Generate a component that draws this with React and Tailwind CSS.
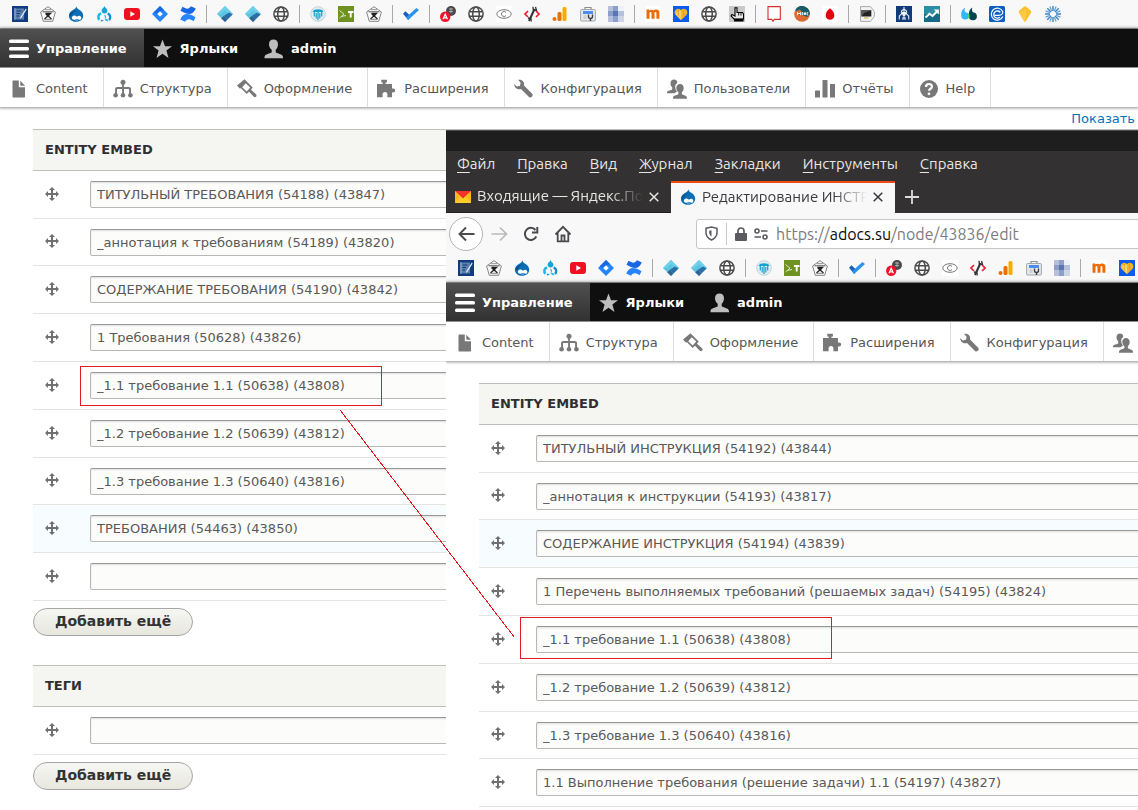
import React from "react";

/* ---------- bookmark icons, 16 x 16 ---------- */

const Fav = ({ children }) => (
  <svg width="16" height="16" viewBox="0 0 16 16" className="block shrink-0" aria-hidden="true">
    {children}
  </svg>
);

const Notebook = () => (
  <Fav>
    <rect width="16" height="16" fill="#123c80" />
    <rect x="2" y="2.5" width="10" height="11" fill="#5d7fae" />
    <path d="M4.5 5h5M4.5 7.500h3.500M4.500 10H7" stroke="#123c80" strokeWidth="1" />
    <path d="M3 2.500v11" stroke="#c7d5e8" strokeWidth="1" strokeDasharray="1 1" />
    <path d="M13.800 2.500 8.500 11l-.8 2 1.800-1.200L14.600 3.500z" fill="#e9f0f8" />
  </Fav>
);

const Pentagon = () => (
  <Fav>
    <path d="M8 .7 15.400 6 12.700 15.300H3.300L.6 6z" fill="#fafafa" stroke="#777" strokeWidth=".9" />
    <path d="M2.500 5.800h11" stroke="#555" strokeWidth="1" />
    <path d="M5 3.700h6" stroke="#777" strokeWidth=".8" />
    <path d="M5.500 7.500h5L8.700 9.300v1.200l2.800 2.500M5.500 7.500l1.800 1.800v1.200L4.500 13" fill="none" stroke="#222" strokeWidth="1.300" />
    <path d="M7 7h2v4H7z" fill="#222" />
    <path d="M4.500 13.300h7" stroke="#666" strokeWidth=".8" />
  </Fav>
);

const Drupal = () => (
  <Fav>
    <path d="M8.300.2C8.800 2.600 10.500 3.200 12 4.300c1.700 1.300 3.200 3.100 3.200 5.500 0 3.700-3 6-7.100 6C4 15.800.9 13.300.9 9.700c0-2.600 1.700-4.300 3.600-5.500C6.300 3.100 8 2.700 8.300.2z" fill="#0a6eb4" />
    <path d="M1.500 8.500C3 5.500 6 5.500 8 3.500 6.500 7 4 7 2.500 11z" fill="#0b4f86" />
    <path d="M4.300 10.600c1.800-1.900 3.600-.6 4.700.1 1.300-.8 2.600-1.300 3.800-.2 1.300 1.400.2 3.700-1.500 3.300-1-.2-1.600-1.100-2.400-1.100-1 .1-1.600 1.300-3.100 1.100-2-.3-2.500-2.100-1.500-3.200z" fill="#fff" />
    <path d="M7.300 14.300c.8-.5 1.800-.5 2.700 0" stroke="#fff" strokeWidth=".6" fill="none" />
  </Fav>
);

const Drop8 = () => (
  <Fav>
    <path d="M8.500 0c.4 1.800 2.900 2.500 2.900 4.600A2.900 2.900 0 0 1 8.500 7.500a2.900 2.900 0 0 1-2.900-2.900C5.600 2.500 8 1.800 8.500 0z" fill="#12a5dc" />
    <path d="M4.600 6.200A5 5 0 0 0 2.800 14.800L4.200 12.600A2.300 2.300 0 0 1 5.500 8.800z" fill="#1cb8ea" />
    <path d="M8.300 8.500A2.800 2.800 0 0 1 5.400 13.500L4.500 15.600A5 5 0 0 0 9 12z" fill="#0f96d0" />
    <path d="M12 6.400A5 5 0 0 1 13.700 14.800L12.200 12.900A2.400 2.400 0 0 0 11.200 8.800z" fill="#0f8fc9" />
    <path d="M9.500 12.500 11.800 13.500 12.400 15.300A4 4 0 0 1 9 14z" fill="#1cb8ea" />
  </Fav>
);

const YouTube = () => (
  <Fav>
    <rect y="2" width="16" height="12" rx="3.200" fill="#f0101f" />
    <path d="M6.300 5.200v5.600L11 8z" fill="#fff" />
  </Fav>
);

const Jira = () => (
  <Fav>
    <path d="M8 0l8 8-8 8-8-8z" fill="#2684ff" />
    <path d="M8 0l4 4-4 1.500L5 8 1.500 6.500z" fill="#1a6ae6" />
    <path d="M8 5.200 10.800 8 8 10.800 5.200 8z" fill="#fff" />
  </Fav>
);

const Confluence = () => (
  <Fav>
    <path d="M.5 4.800 2.500 .8C6.500 3.200 8.500 3.500 11 .3L15.800 2.500C12.500 9.800 7.500 9 .5 4.800z" fill="#1868e6" />
    <path d="M.2 13.500C3.500 6.200 8.500 7 15.500 11.200L13.500 15.200C9.500 12.800 7.500 12.500 5 15.700z" fill="#2684ff" />
  </Fav>
);

const Diamond = () => (
  <Fav>
    <path d="M8 0l8 8-8 8-8-8z" fill="#5cc3e0" />
    <path d="M8 0l8 8-4 0-4-4-4 4H0z" fill="#6fd0ea" />
    <path d="M12 6.500 15.500 8.500 10.400 13.500 7 9.800z" fill="#2b6fa8" />
    <path d="M7 9.800 10.400 13.500 8 16 4.200 12.300z" fill="#34618f" />
  </Fav>
);

const Globe = () => (
  <Fav>
    <g fill="none" stroke="#4a4a4a" strokeWidth="1.500">
      <circle cx="8" cy="8" r="7.100" />
      <ellipse cx="8" cy="8" rx="3.300" ry="7.100" />
      <path d="M1.500 5.700h13M1.500 10.300h13" />
    </g>
  </Fav>
);

const Tree = () => (
  <Fav>
    <circle cx="8" cy="8" r="7.300" fill="#e4eef3" stroke="#b5c9d2" strokeWidth=".8" />
    <path d="M2.500 6C3 3.800 5.500 3.200 8 3.200s5 .6 5.500 2.800z" fill="#12a3d4" />
    <path d="M4.300 5.500v5M8 5.500V14M11.700 5.500v5M6.200 7v5.500M9.800 7v5.500" fill="none" stroke="#159fd0" strokeWidth="1.200" />
  </Fav>
);

const GreenT = () => (
  <Fav>
    <rect width="16" height="16" fill="#6f9222" />
    <path d="M1.500 4.500 6 8.200 1.500 12M3.500 10.500 8 9.500" stroke="#dce8c0" strokeWidth="1" fill="none" />
    <path d="M10 6h5.500M12.700 6v5.500" stroke="#fff" strokeWidth="1.900" />
  </Fav>
);

const Check = () => (
  <Fav>
    <path d="M0 7.800 2.500 5.300 7.500 10 5.300 14z" fill="#1a5fc0" />
    <path d="M5.200 13.900 2.900 11.600 13.400 2 16 4z" fill="#2b93ee" />
  </Fav>
);

const RedA = () => (
  <Fav>
    <circle cx="11" cy="5" r="5" fill="#4b4b4b" />
    <path d="M9 3h4M9 5.500h4M11 2v5" stroke="#bbb" strokeWidth=".8" />
    <circle cx="5.200" cy="10.800" r="5.200" fill="#f2122c" />
    <path d="M3 13.300 5.200 8.300 7.400 13.300M3.700 11.900h3" stroke="#fff" strokeWidth="1.200" fill="none" />
  </Fav>
);

const Eye = () => (
  <Fav>
    <rect width="16" height="16" fill="#fff" />
    <ellipse cx="8" cy="8" rx="7.200" ry="4.300" fill="none" stroke="#777" strokeWidth="1" />
    <path d="M10 6.500a2.500 2.500 0 1 0 0 3" fill="none" stroke="#777" strokeWidth="1" />
  </Fav>
);

const CodeWrench = () => (
  <Fav>
    <path d="M4 5 1 8l3 3M12 5l3 3-3 3" fill="none" stroke="#ec1c35" strokeWidth="1.700" />
    <path d="M5 15 10.500 3" stroke="#333" strokeWidth="2" />
    <path d="M9 .8 9.300 4 12.500 4.500 11.500 1M4 12l3 .8.2 2.700" stroke="#333" strokeWidth="1.300" fill="none" />
  </Fav>
);

const Analytics = () => (
  <Fav>
    <rect x="10.500" y="1" width="4" height="14" rx="1.500" fill="#f9ab00" />
    <rect x="5.500" y="6" width="4" height="9" rx="1.500" fill="#e8710a" />
    <circle cx="2.500" cy="13" r="2" fill="#e8710a" />
  </Fav>
);

const Toolbox = () => (
  <Fav>
    <path d="M5 3.500V1.500h6v2" fill="none" stroke="#8a8f94" strokeWidth="1.200" />
    <rect x=".6" y="3.500" width="14.800" height="11.500" rx="1" fill="#e6e8ea" stroke="#9a9fa4" strokeWidth=".9" />
    <rect x="3" y="5" width="10" height="3" fill="#4b8cf0" />
    <path d="M3.500 10h3M3.500 12h3" stroke="#b5b9bd" strokeWidth="1" />
    <path d="M8.500 8.500v2a2 2 0 0 0 4 0v-2M10.500 12.500V15" stroke="#3d4145" strokeWidth="1.400" fill="none" />
  </Fav>
);

const Pixels = () => (
  <Fav>
    <rect width="16" height="16" fill="#eef1f7" />
    <path d="M0 0h5v5H0zM10 5h6v5h-6zM0 10h5v6H0z" fill="#b4c0dc" />
    <path d="M5 0h5v5H5zM0 5h5v5H0zM5 10h5v6H5z" fill="#8c9fca" />
    <path d="M5 5h5v5H5z" fill="#5b74b3" />
    <path d="M10 10h6v6h-6z" fill="#cdd5e7" />
  </Fav>
);

const Moodle = () => (
  <Fav>
    <rect width="16" height="16" rx="2" fill="#fff" />
    <path d="M1.500 3.600h2.600l.3.800C5.800 3.300 7.800 3.400 8.500 4.600 10 3 14.400 2.900 14.400 6.500v6.300h-3V7.200c0-1.700-1.900-1.500-1.900 0v5.600h-3V7.200c0-1.700-2-1.500-2 0v5.600h-3z" fill="#ec6b08" />
  </Fav>
);

const Heart = () => (
  <Fav>
    <rect width="16" height="16" fill="#0a5cf0" />
    <path d="M8 14.300 2.600 9C.4 6.500 2.300 2.500 5.300 2.700 6.800 2.800 7.600 3.700 8 4.300 8.400 3.700 9.200 2.800 10.700 2.700c3-.2 4.900 3.800 2.700 6.300z" fill="#f2b62a" />
    <path d="M8 4.800v9L3.500 9C2.500 7 4.500 3.500 8 4.800z" fill="#f7d568" />
    <path d="M5.300 3.500v7M10.700 3.500v7" stroke="#e08e2c" strokeWidth=".8" />
  </Fav>
);

const Hand = () => (
  <Fav>
    <rect width="16" height="16" fill="#c9c9c9" />
    <path d="M6 10V1.800h2V6.500h5.500L14.500 8v5H5L2 10l1-1.500z" fill="#e8e8e8" stroke="#000" strokeWidth="1.100" />
    <path d="M9.700 6.500v3M12 6.500v3" stroke="#000" strokeWidth=".9" />
    <path d="M5 12.800h9.500V15.500H5z" fill="#000" />
  </Fav>
);

const Speech = () => (
  <Fav>
    <path d="M2 .6h12.300v12.800H8.300L7 15.300 5.700 13.400H2z" fill="#fff" stroke="#d0312d" strokeWidth="1.100" />
  </Fav>
);

const Mooc = () => (
  <Fav>
    <circle cx="8" cy="8" r="7.800" fill="#dd6a30" />
    <path d="M1.500 3.500A7.800 7.800 0 0 1 15.800 8.500L13 11l-2-1L3 8z" fill="#175c69" />
    <path d="M1 5.500 6 3.500 8 6 3 9.500z" fill="#dd6a30" />
    <path d="M3.500 9.200V6.500L5 8l1.500-1.500v2.700M8 6.700h1v2H8zM10.500 6.700h1v2h-1zM14.300 6.700H13v2.200h1.300" stroke="#fff" strokeWidth=".9" fill="none" />
  </Fav>
);

const RedDrop = () => (
  <Fav>
    <rect width="16" height="16" rx="2" fill="#fff" />
    <path d="M8 2.200c2.300 1.600 4.300 4.300 4.300 7A4.300 4.300 0 0 1 8 13.800a4.300 4.300 0 0 1-4.300-4.600c0-2.700 2-5.400 4.300-7z" fill="#e3000f" />
  </Fav>
);

const Tag = () => (
  <Fav>
    <path d="M1.500.6h10l3.900 5v4.800l-3.900 5h-10z" fill="#f2f2f2" stroke="#aaa" strokeWidth="1" />
    <rect x="2.300" y="4" width="10" height="6.500" fill="#222" />
    <path d="M3 10 5 7l7-2.500V4H3z" fill="#575757" />
    <path d="M5 12h4.500" stroke="#caa429" strokeWidth="1" />
  </Fav>
);

const Tower = () => (
  <Fav>
    <rect width="16" height="16" fill="#123a78" />
    <path d="M8 1v12M8 3 5.500 5v3L3.300 10v3.500M8 3l2.500 2v3l2.200 2v3.500" stroke="#dde8f5" strokeWidth="1.100" fill="none" />
    <path d="M6 6h4v2l-1 2H7L6 8zM6.500 11h1v3h-1zM8.500 11h1v3h-1z" fill="#eef4fb" />
  </Fav>
);

const Trend = () => (
  <Fav>
    <rect width="16" height="8" fill="#2d8fa6" />
    <rect y="8" width="16" height="8" fill="#176a85" />
    <path d="M1.500 11.500 5.500 7.800 8.500 10 13 5.500" stroke="#fff" strokeWidth="2" fill="none" />
    <path d="M9.800 3.500h5v5z" fill="#fff" />
  </Fav>
);

const Quotes = () => (
  <Fav>
    <path d="M4.500 1.500C3 3.500 3.700 5.500 4.500 6.200 7 6.500 8 8 8 10.200a3.900 3.900 0 0 1-7.700 0C-.3 6.500 1 3 4.500 1.500z" fill="#32b8ff" />
    <path d="M11.500 1.500C10.500 3.500 11 5.500 12 6.200c2.700.3 3.900 1.800 3.900 4.300a3.900 3.900 0 0 1-7.900-.3C7.500 6.500 8.500 3 11.500 1.500z" fill="#05454f" />
    <path d="M7.700 7.300c1.200 1.500 1.200 4 0 5.500-1-1.500-1-4 0-5.500z" fill="#3ddc55" />
  </Fav>
);

const BlueE = () => (
  <Fav>
    <rect width="16" height="16" rx="1.500" fill="#0b5fc0" />
    <path d="M13.800 10.500A6 6 0 1 1 13.700 5.500c.6 2.500-1.500 3.800-4 3.800H5.500" fill="none" stroke="#fff" strokeWidth="1.200" />
    <path d="M10.800 11.200a3.600 3.600 0 1 1 .5-4.800" fill="none" stroke="#fff" strokeWidth="1.400" />
  </Fav>
);

const Gem = () => (
  <Fav>
    <path d="M8 .2Q8.800.2 9.500.9L14 5Q14.600 5.800 14 6.700L8.800 15.200Q8 16 7.200 15.200L2 6.700Q1.400 5.800 2 5L6.500.9Q7.200.2 8 .2z" fill="#fbc02d" />
    <path d="M2 6.500 9.500 3.500 8 15.800Q7.500 15.700 7.200 15.200z" fill="#fccb45" />
  </Fav>
);

const Burst = () => (
  <Fav>
    <g stroke="#3b82c4" strokeWidth="1.400">
      <path d="M8 0v5M8 11v5M0 8h5M11 8h5" />
      <path d="M2.300 2.300 5.900 5.900M10.100 10.100l3.600 3.600M2.300 13.700l3.600-3.600M10.100 5.900l3.600-3.600" />
    </g>
    <g stroke="#5f9fd6" strokeWidth="1.200">
      <path d="M4.900.6 6.800 5.200M9.200 10.800l1.900 4.600M.6 4.900l4.600 1.900M10.800 9.200l4.600 1.900M.6 11.100l4.600-1.900M10.800 6.800l4.600-1.900M4.900 15.400l1.900-4.600M9.200 5.200 11.100.6" />
    </g>
  </Fav>
);

const BOOKMARKS = [
  [["Журнал", Notebook], ["Кафедра", Pentagon], ["Drupal", Drupal], ["Drupal 8", Drop8], ["YouTube", YouTube], ["Jira", Jira], ["Confluence", Confluence]],
  [["Проект 1", Diamond], ["Проект 2", Diamond], ["Сайт", Globe]],
  [["Дерево", Tree], ["Тесты", GreenT], ["Кафедра 2", Pentagon]],
  [["Задачи", Check]],
  [["Словарь", RedA], ["Сайт 2", Globe], ["Права", Eye], ["Код", CodeWrench], ["Analytics", Analytics], ["Инструменты", Toolbox], ["Пиксели", Pixels]],
  [["Moodle", Moodle], ["Помощь", Heart], ["Сайт 3", Globe], ["Указатель", Hand]],
  [["Отзывы", Speech], ["MOOC", Mooc], ["Капля", RedDrop]],
  [["Экран", Tag]],
  [["Башня", Tower], ["Тренды", Trend]],
  [["Цитаты", Quotes], ["Почта", BlueE], ["Кристалл", Gem], ["Лучи", Burst]],
];

function BookmarksBar() {
  return (
    <nav aria-label="Закладки" className="flex h-[29px] items-center border-b border-[#a9a9a9] bg-[#f8f8f8] px-3">
      {BOOKMARKS.map((group, g) => (
        <React.Fragment key={g}>
          {g > 0 && <span className="mx-[10px] h-[18px] w-px bg-[#a8a8a8]" />}
          <div className="flex gap-3">
            {group.map(([name, Icon]) => (
              <a key={name} href="#" aria-label={name}>
                <Icon />
              </a>
            ))}
          </div>
        </React.Fragment>
      ))}
    </nav>
  );
}

/* ---------- admin toolbar icons, 20 x 20 ---------- */

const Glyph = ({ color = "#787878", children }) => (
  <svg width="20" height="20" viewBox="0 0 20 20" fill={color} className="block shrink-0" aria-hidden="true">
    {children}
  </svg>
);

const Bars = () => (
  <Glyph color="#fff">
    <rect y="0.500" width="20" height="3.600" rx="1.500" />
    <rect y="8" width="20" height="3.600" rx="1.500" />
    <rect y="15.500" width="20" height="3.600" rx="1.500" />
  </Glyph>
);
const Star = () => (
  <Glyph color="#bebebe">
    <path d="M9.500 .5 12 7.200h7l-5.600 4.300 2.100 7.500-6-4.300-6 4.300 2.100-7.500L0 7.200h7z" />
  </Glyph>
);
const Person = () => (
  <Glyph color="#bebebe">
    <path d="M9.500 .5c2.900 0 4.500 2 4.500 4.800 0 2.500-1 4.300-2.300 5.500v2.500c1 1.200 7.300 1.700 7.300 4.700v1.200H.5V18c0-3 6.300-3.500 7.200-4.700v-2.500C6.200 9.600 5 7.800 5 5.300 5 2.500 6.600.5 9.500.5z" />
  </Glyph>
);
const Doc = () => (
  <Glyph>
    <path d="M4.500 1.500h5.300v6.700H16v9.300c0 .6-.4 1-1 1H4.500c-.6 0-1-.4-1-1v-15c0-.6.400-1 1-1z" />
    <path d="M11.300 1.700 16 6.800h-4.700z" />
  </Glyph>
);
const Sitemap = () => (
  <Glyph>
    <circle cx="10" cy="3.200" r="2.500" />
    <path d="M9.100 4h1.800v4h4.800c1.500 0 2.300.8 2.300 2.300V15h-1.900v-4.500c0-.4-.2-.6-.6-.6h-4.500V15H9.100V9.900H4.600c-.4 0-.6.2-.6.600V15H2.100v-4.700C2.100 8.800 2.900 8 4.400 8h4.700z" />
    <circle cx="2.600" cy="16.300" r="2.300" />
    <circle cx="10" cy="16.300" r="2.300" />
    <circle cx="17.400" cy="16.300" r="2.300" />
  </Glyph>
);
const Brush = () => (
  <Glyph>
    <path d="M7.500 .3 15.700 8.500 14 10.700l5 4.600c1.500 1.500-.5 4-2.200 2.500L12 12.800 9.700 15 4 9.300 2.700 9.500 0 6.500zM8.700 4.300 5.200 8.200 9.700 12.500 13.200 8.600z" fillRule="evenodd" />
  </Glyph>
);
const Puzzle = () => (
  <Glyph>
    <path d="M0 5h5.700V3.500H4.300V.7h5.600v2.800H8.500V5H15v4.500h1.200a1.900 1.900 0 1 1 0 3.900H15V18.300h-4.600v-2a2.500 2.500 0 1 0-4.800 0v2H0z" />
  </Glyph>
);
const Wrench = () => (
  <Glyph>
    <path d="M4 .8C8 0 10.800 2.600 10 6.500l8.200 8.300c1.600 1.800-1.300 4.900-3.200 3.200L7 10C4 11 .3 9.300.2 5l2.500 2.500L6 6.800l.6-3z" />
  </Glyph>
);
const People = () => (
  <Glyph>
    <path d="M7 .5c2.200 0 3.300 1.500 3.300 3.400C8.300 5 7.900 7 8.400 9.500 8.700 11 9.500 12 10 12.400L7.500 14.300H0v-1c0-1.700 4.600-1.800 5.200-3V8.200C4.200 7.400 3.500 6 3.500 4.200 3.500 2 4.800.5 7 .5z" />
    <path d="M13 5c2.400 0 3.700 1.700 3.700 4 0 1.900-.8 3.300-1.800 4.100v2c.7 1.100 5.100 1.500 5.100 3.600v1H6v-1c0-2.100 4.700-2.500 5.400-3.600v-2C10.200 12.300 9.300 10.900 9.300 9c0-2.300 1.300-4 3.700-4z" />
  </Glyph>
);
const Chart = () => (
  <Glyph>
    <rect x="0" y="11.500" width="5" height="7" rx=".5" />
    <rect x="7.500" y="1" width="5" height="17.500" rx=".5" />
    <rect x="15" y="5" width="5" height="13.500" rx=".5" />
  </Glyph>
);
const Help = () => (
  <Glyph>
    <circle cx="10" cy="10" r="9" />
    <path d="M7 8c0-4 6-3.800 6-.5 0 2.300-3 2.200-3 4.300" fill="none" stroke="#fff" strokeWidth="2.200" />
    <circle cx="10" cy="14.800" r="1.400" fill="#fff" />
  </Glyph>
);

const MENU = [
  ["Content", Doc],
  ["Структура", Sitemap],
  ["Оформление", Brush],
  ["Расширения", Puzzle],
  ["Конфигурация", Wrench],
  ["Пользователи", People],
  ["Отчёты", Chart],
  ["Help", Help],
];

function AdminToolbar() {
  return (
    <header className="relative shadow-[0_0_3px_1px_rgba(0,0,0,0.45)]">
      <nav aria-label="Панель" className="flex h-[39px] border-b border-[#8f8f8f] bg-[#0f0f0f] text-[13px] font-bold text-white">
        <a href="#" className="flex items-center gap-[7px] bg-linear-to-b from-[#505050] to-[#323232] pt-[2px] pr-[17px] pl-[9px]">
          <Bars />
          Управление
        </a>
        <a href="#" className="flex items-center gap-[7px] pt-[2px] pr-[17px] pl-[9px]">
          <Star />
          Ярлыки
        </a>
        <a href="#" className="flex items-center gap-[7px] pt-[2px] pr-[17px] pl-[9px]">
          <Person />
          admin
        </a>
      </nav>
      <nav aria-label="Управление" className="flex h-[39px] bg-white text-[13px] text-[#565656]">
        {MENU.map(([label, Icon]) => (
          <a key={label} href="#" className="flex shrink-0 items-center gap-[7px] border-r border-[#dddddd] pt-[2px] pr-[15px] pl-[9px]">
            <Icon />
            {label}
          </a>
        ))}
      </nav>
    </header>
  );
}

/* ---------- sortable field tables ---------- */

function DragHandle() {
  return (
    <button type="button" aria-label="Переместить" className="block cursor-move">
      <svg width="14" height="14" viewBox="0 0 14 14" fill="#707070" className="block" aria-hidden="true">
        <path d="M7 0l3 3H8v3h3V4l3 3-3 3V8H8v3h2l-3 3-3-3h2V8H3v2L0 7l3-3v2h3V3H4z" />
      </svg>
    </button>
  );
}

function FieldTable({ title, rows, active }) {
  return (
    <table className="w-full border-collapse text-[13px]">
      <thead>
        <tr>
          <th colSpan={2} className="h-[41px] border-y border-[#bfbfba] bg-[#f5f5f2] pl-3 text-left font-bold text-[#2f2f2f] uppercase">
            {title}
          </th>
        </tr>
      </thead>
      <tbody>
        {rows.map((value, i) => (
          <tr
            key={i}
            className={
              i === active
                ? "h-12 border-b border-[#e4e4e0] bg-[#f7fcff] nth-[5n+2]:h-[47px]"
                : "h-12 border-b border-[#e4e4e0] nth-[5n+2]:h-[47px]"
            }
          >
            <td className="w-[57px] pb-[2px] pl-3">
              <DragHandle />
            </td>
            <td className="py-0">
              <input
                type="text"
                defaultValue={value}
                aria-label={`${title} ${i + 1}`}
                className="block h-[27px] w-full rounded-[2px] border border-[#b8b8b8] border-t-[#999] bg-[#fcfcfa] px-[6px] text-[#595959] shadow-[inset_0_1px_2px_rgba(0,0,0,0.125)] outline-none"
              />
            </td>
          </tr>
        ))}
      </tbody>
    </table>
  );
}

function AddButton() {
  return (
    <button
      type="button"
      className="mt-[7px] h-7 rounded-full border border-[#a6a6a6] bg-linear-to-b from-[#f6f6f3] to-[#e7e7df] px-[21px] pb-[2px] text-[14px] leading-none font-bold text-[#333]"
    >
      Добавить ещё
    </button>
  );
}

const REQUIREMENTS = [
  "ТИТУЛЬНЫЙ ТРЕБОВАНИЯ (54188) (43847)",
  "_аннотация к требованиям (54189) (43820)",
  "СОДЕРЖАНИЕ ТРЕБОВАНИЯ (54190) (43842)",
  "1 Требования (50628) (43826)",
  "_1.1 требование 1.1 (50638) (43808)",
  "_1.2 требование 1.2 (50639) (43812)",
  "_1.3 требование 1.3 (50640) (43816)",
  "ТРЕБОВАНИЯ (54463) (43850)",
  "",
];

const INSTRUCTIONS = [
  "ТИТУЛЬНЫЙ ИНСТРУКЦИЯ (54192) (43844)",
  "_аннотация к инструкции (54193) (43817)",
  "СОДЕРЖАНИЕ ИНСТРУКЦИЯ (54194) (43839)",
  "1 Перечень выполняемых требований (решаемых задач) (54195) (43824)",
  "_1.1 требование 1.1 (50638) (43808)",
  "_1.2 требование 1.2 (50639) (43812)",
  "_1.3 требование 1.3 (50640) (43816)",
  "1.1 Выполнение требования (решение задачи) 1.1 (54197) (43827)",
];

/* ---------- browser window ---------- */

const WINDOW_MENU = ["Файл", "Правка", "Вид", "Журнал", "Закладки", "Инструменты", "Справка"];

const Cross = () => (
  <svg width="10" height="10" viewBox="0 0 10 10" fill="none" stroke="currentColor" strokeWidth="1.500" aria-hidden="true">
    <path d="M.7.7l8.600 8.600M9.300.7.7 9.300" />
  </svg>
);

function BrowserChrome() {
  return (
    <div className="font-['Ubuntu','Noto_Sans',sans-serif] text-[15px]">
      <div className="h-[21px] border-t border-[#4b4b4b] bg-[#1e1e1e]" />
      <div className="bg-[#343132] text-[#e8e6e3]">
        <nav aria-label="Меню" className="flex h-[30px] items-center gap-[22px] pb-[3px] pl-[11px]">
          {WINDOW_MENU.map((item) => (
            <button key={item} type="button">
              <span className="underline underline-offset-[3px]">{item[0]}</span>
              {item.slice(1)}
            </button>
          ))}
        </nav>
        <div className="flex h-8">
          <div className="flex w-[225px] items-center gap-[6px] border-b border-[#1f1f1f] pr-3 pl-[9px]">
            <svg width="16" height="12" viewBox="0 0 16 12" className="shrink-0" aria-hidden="true">
              <rect width="16" height="12" fill="#ffcc2e" />
              <path d="M0 0v12l5-6zM16 0v12l-5-6z" fill="#fbb91c" />
              <path d="M0 0h16L8 7.500z" fill="#f5322c" />
            </svg>
            <a href="#" className="min-w-0 flex-1 overflow-hidden mask-r-from-80% whitespace-nowrap">
              Входящие — Яндекс.По
            </a>
            <button type="button" aria-label="Закрыть вкладку">
              <Cross />
            </button>
          </div>
          <div className="flex w-[224px] items-center gap-[6px] border-t-2 border-[#ee4a12] bg-[#f8f8f8] pr-3 pb-[2px] pl-[9px] text-[#38383d]">
            <Drupal />
            <a href="#" className="min-w-0 flex-1 overflow-hidden mask-r-from-80% whitespace-nowrap">
              Редактирование ИНСТР
            </a>
            <button type="button" aria-label="Закрыть вкладку">
              <Cross />
            </button>
          </div>
          <button type="button" aria-label="Новая вкладка" className="ml-[10px]">
            <svg width="14" height="14" viewBox="0 0 14 14" stroke="#dcdcdc" strokeWidth="1.800" aria-hidden="true">
              <path d="M7 0v14M0 7h14" />
            </svg>
          </button>
        </div>
      </div>
      <div className="flex h-[41px] items-center bg-[#f8f8f8] pl-[3px] text-[#4a4a4f]">
        <button type="button" aria-label="Назад" className="flex size-[34px] items-center justify-center rounded-full border border-[#b5b5b5] bg-white">
          <svg width="17" height="16" viewBox="0 0 17 16" fill="none" stroke="currentColor" strokeWidth="1.900" aria-hidden="true">
            <path d="M16.500 8H1.500M8 1.500 1.500 8 8 14.500" />
          </svg>
        </button>
        <button type="button" aria-label="Вперёд" className="ml-2 text-[#b9b9b9]">
          <svg width="17" height="16" viewBox="0 0 17 16" fill="none" stroke="currentColor" strokeWidth="1.700" className="block" aria-hidden="true">
            <path d="M.5 8h15M9 1.500 15.500 8 9 14.500" />
          </svg>
        </button>
        <button type="button" aria-label="Обновить" className="ml-[15px]">
          <svg width="16" height="16" viewBox="0 0 16 16" fill="none" stroke="currentColor" strokeWidth="2" className="block" aria-hidden="true">
            <path d="M13.300 10.500A6 6 0 1 1 12.500 4" />
            <path d="M14.300 1v5.500H9" />
          </svg>
        </button>
        <button type="button" aria-label="Домой" className="ml-[15px]">
          <svg width="18" height="18" viewBox="0 0 18 18" fill="none" stroke="currentColor" strokeWidth="1.800" className="block" aria-hidden="true">
            <path d="M1.500 9.500 9 1.800l7.500 7.700M3.700 8v8.300h10.600V8" />
            <path d="M7.500 16V10.500h3V16" />
          </svg>
        </button>
        <label className="ml-31 flex h-[30px] flex-1 items-center rounded-l-[3px] border border-[#c6c6c6] bg-white pl-2">
          <svg width="13" height="15" viewBox="0 0 13 15" fill="none" stroke="#5a5a5f" strokeWidth="1.500" aria-hidden="true">
            <path d="M1 2.300 6.500.9 12 2.300V6.500c0 3.500-2 6-5.500 7.500C3 12.500 1 10 1 6.500z" />
            <path d="M6.500 4.200v6.300c-1.500-1-2.300-2.300-2.300-4v-1.800z" fill="#5a5a5f" stroke="none" />
          </svg>
          <span className="mx-2 h-[22px] w-px bg-[#c8c8c8]" />
          <svg width="12" height="14" viewBox="0 0 12 14" aria-hidden="true">
            <path d="M3 6.500V4a3 3 0 0 1 6 0v2.500" fill="none" stroke="#5a5a5f" strokeWidth="1.700" />
            <rect y="6" width="12" height="8" rx="1" fill="#5a5a5f" />
          </svg>
          <svg width="14" height="12" viewBox="0 0 14 12" fill="none" stroke="#5a5a5f" strokeWidth="1.600" className="ml-[7px]" aria-hidden="true">
            <circle cx="3" cy="3" r="2" />
            <path d="M7 3h6.500M.5 9H7" />
            <circle cx="11" cy="9" r="2" />
          </svg>
          <span className="ml-2 text-[16px] text-[#7c7c80]">
            https://<span className="text-[#0c0c0d]">adocs.su</span>/node/43836/edit
          </span>
        </label>
      </div>
    </div>
  );
}

function BrowserWindow() {
  return (
    <section className="absolute top-[130px] left-[446px] h-full w-full overflow-hidden bg-white">
      <BrowserChrome />
      <BookmarksBar />
      <AdminToolbar />
      <main className="pt-[22px] pl-[33px]">
        <FieldTable title="Entity Embed" rows={INSTRUCTIONS} active={2} />
      </main>
    </section>
  );
}

/* ---------- red marks that tie the two shared rows together ---------- */

function Marks() {
  return (
    <svg width="1138" height="810" viewBox="0 0 1138 810" fill="none" stroke="#e31b23" className="pointer-events-none absolute top-0 left-0" aria-hidden="true">
      <g shapeRendering="crispEdges">
        <rect x="80.500" y="366.500" width="301" height="39" />
        <rect x="520.500" y="617.500" width="311" height="41" />
        <path d="M340.500 410.500 514.500 637.500" />
      </g>
    </svg>
  );
}

export default function App() {
  return (
    <div className="relative h-screen overflow-hidden bg-white font-['DejaVu_Sans',sans-serif]">
      <BookmarksBar />
      <AdminToolbar />
      <main className="pl-[33px]">
        <div className="flex h-[22px] items-center justify-end pt-[2px] pr-[3px] text-[13px]">
          <a href="#" className="text-[#0074bd]">
            Показать
          </a>
        </div>
        <FieldTable title="Entity Embed" rows={REQUIREMENTS} active={7} />
        <AddButton />
        <div className="mt-[29px]">
          <FieldTable title="Теги" rows={[""]} />
          <AddButton />
        </div>
      </main>
      <BrowserWindow />
      <Marks />
    </div>
  );
}
